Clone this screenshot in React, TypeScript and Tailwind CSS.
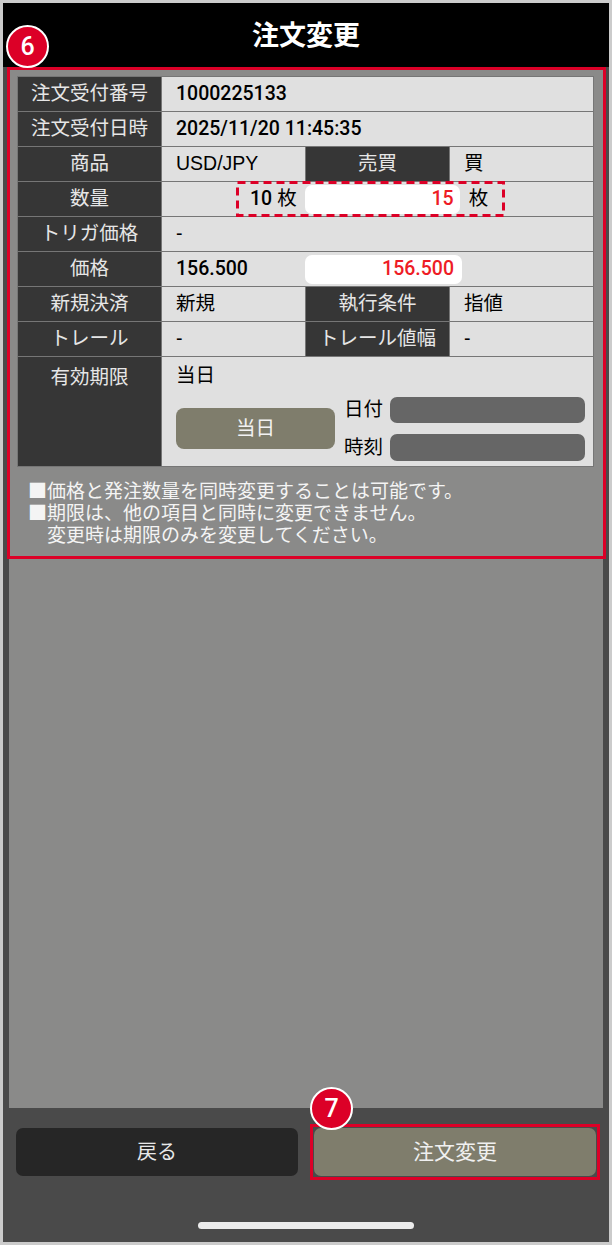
import React from 'react';

const FONT = { fontFamily: '"Liberation Sans", "Noto Sans CJK JP", sans-serif' };
const NUM = { fontFamily: 'Roboto, "Liberation Sans", sans-serif' };
const JP = { fontFamily: '"Noto Sans CJK JP", sans-serif' };

function Badge({ n, className }: { n: string; className: string }) {
  return (
    <div
      className={`absolute w-[43px] h-[43px] rounded-full bg-[#dc0027] border-2 border-white flex items-center justify-center text-white text-[25px] font-medium ${className}`}
      style={NUM}
    >
      {n}
    </div>
  );
}

function Label({ children, className = '' }: { children: React.ReactNode; className?: string }) {
  return (
    <div className={`bg-[#363636] text-[#e6e6e6] text-[19.5px] flex items-center justify-center h-[34px] ${className}`}>
      {children}
    </div>
  );
}

function Value({ children, className = '' }: { children: React.ReactNode; className?: string }) {
  return (
    <div className={`bg-[#e0e0e0] text-black text-[19.5px] flex items-center pl-[14px] h-[34px] ${className}`}>
      {children}
    </div>
  );
}

export default function App() {
  return (
    <div style={FONT} className="relative w-[612px] h-[1245px] bg-[#cbcbcb] p-[3px] flex flex-col overflow-hidden">
      <div className="h-[64px] shrink-0 bg-black flex items-center justify-center text-white text-[27px] font-bold pt-[2px]">
        注文変更
      </div>

      <div className="flex-1 flex flex-col bg-[#4a4a4a]">
        <div className="flex-1 mx-[6px] bg-[#8a8a89]">
          <div className="-ml-[2px] -mr-[3px] border-[3px] border-[#dc0027] pt-[6px] pb-[11px]">
            <div className="ml-[7px] w-[577px] grid grid-cols-[143px_143px_143px_143px] gap-px p-px bg-[#767676]">
              <Label>注文受付番号</Label>
              <Value className="col-span-3">
                <span style={NUM} className="font-medium">1000225133</span>
              </Value>

              <Label>注文受付日時</Label>
              <Value className="col-span-3">
                <span style={NUM} className="font-medium">2025/11/20 11:45:35</span>
              </Value>

              <Label>商品</Label>
              <Value>USD/JPY</Value>
              <Label>売買</Label>
              <Value className="pl-[13px]">買</Value>

              <Label>数量</Label>
              <Value className="col-span-3 pl-[74px]">
                <div className="relative w-[269px] h-[36px] flex items-center pl-[14px]">
                  <svg className="absolute inset-0" width="269" height="36">
                    <rect x="1.5" y="1.5" width="266" height="33" fill="none" stroke="#dc0027" strokeWidth="3" strokeDasharray="8 5" />
                  </svg>
                  <span style={NUM} className="font-medium">10</span>
                  <span className="ml-[5px]">枚</span>
                  <div
                    style={NUM}
                    className="ml-[8px] w-[155px] h-[29px] bg-white rounded-[7px] flex items-center justify-end pr-[6px] text-[#ee1c25] font-medium"
                  >
                    15
                  </div>
                  <span className="ml-[9px]">枚</span>
                </div>
              </Value>

              <Label>トリガ価格</Label>
              <Value className="col-span-3">-</Value>

              <Label>価格</Label>
              <Value className="col-span-3">
                <span style={NUM} className="w-[129px] font-medium">156.500</span>
                <div
                  style={NUM}
                  className="w-[157px] h-[29px] bg-white rounded-[7px] flex items-center justify-end pr-[8px] text-[#ee1c25] font-medium"
                >
                  156.500
                </div>
              </Value>

              <Label>新規決済</Label>
              <Value>新規</Value>
              <Label>執行条件</Label>
              <Value className="pl-[13px]">指値</Value>

              <Label>トレール</Label>
              <Value>-</Value>
              <Label>トレール値幅</Label>
              <Value className="pl-[13px]">-</Value>

              <Label className="h-[109px] items-start pt-[6px]">有効期限</Label>
              <div className="col-span-3 h-[109px] bg-[#e0e0e0] text-black text-[19.5px] flex flex-col pl-[14px] pr-[8px] pt-[6px]">
                <div className="leading-[24px]">当日</div>
                <div className="mt-[8px] flex items-center">
                  <div className="w-[159px] h-[41px] rounded-[8px] bg-[#7f7d6c] text-[#f2f2f2] flex items-center justify-center">
                    当日
                  </div>
                  <div className="ml-[9px] flex-1 flex flex-col gap-[9px]">
                    <div className="flex items-center">
                      <span className="w-[46px]">日付</span>
                      <div className="flex-1 h-[26px] rounded-[7px] bg-[#666666]" />
                    </div>
                    <div className="flex items-center">
                      <span className="w-[46px]">時刻</span>
                      <div className="flex-1 h-[27px] rounded-[7px] bg-[#666666]" />
                    </div>
                  </div>
                </div>
              </div>
            </div>

            <div style={JP} className="mt-[12px] ml-[18px] text-[#f4f4f4] text-[19px] leading-[22px]">
              <div>■価格と発注数量を同時変更することは可能です。</div>
              <div>■期限は、他の項目と同時に変更できません。</div>
              <div className="ml-[19px]">変更時は期限のみを変更してください。</div>
            </div>
          </div>
        </div>

        <div className="h-[134px] shrink-0 flex flex-col px-[13px] pt-[20px]">
          <div className="flex gap-[16px]">
            <button className="w-[282px] h-[48px] rounded-[7px] bg-[#262626] text-[#e8e8e8] text-[20px]">
              戻る
            </button>
            <div className="relative -m-[4px] border-[3px] border-[#dc0027] p-px">
              <button className="block w-[282px] h-[48px] rounded-[7px] bg-[#7f7d6c] text-[#f0f0f0] text-[21px]">
                注文変更
              </button>
              <Badge n="7" className="left-[-3px] top-[-40px]" />
            </div>
          </div>
          <div className="mt-[46px] mx-auto w-[216px] h-[7px] rounded-full bg-[#ececec]" />
        </div>
      </div>

      <Badge n="6" className="left-[6px] top-[25px]" />
    </div>
  );
}
